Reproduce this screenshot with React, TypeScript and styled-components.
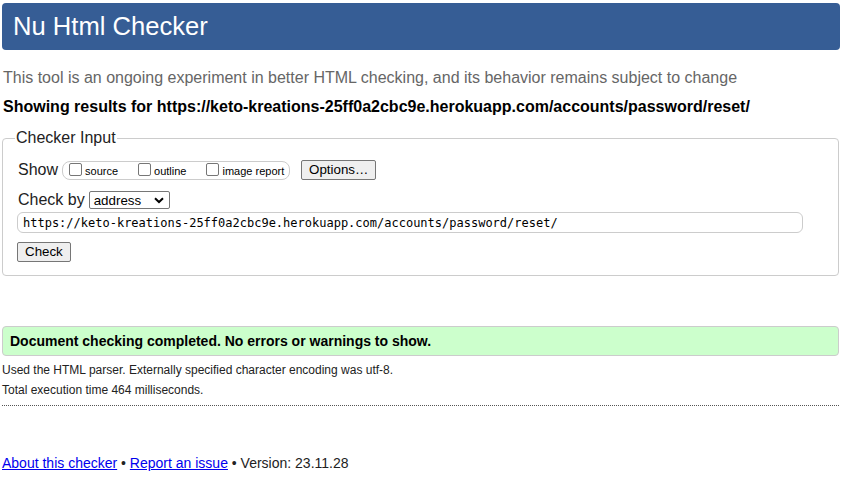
import styled, { createGlobalStyle } from "styled-components";

const GlobalStyle = createGlobalStyle`
  html, body {
    margin: 0;
    padding: 0;
    background: #fff;
  }
  body {
    font-family: "Liberation Sans", Arial, sans-serif;
    color: #000;
  }
`;

const Page = styled.div`
  padding: 3px 2px 0 2px;
  display: flex;
  flex-direction: column;
`;

const Header = styled.h1`
  margin: 0;
  height: 47px;
  display: flex;
  align-items: center;
  padding: 0 11px;
  background: #365d95;
  border-radius: 4px;
  color: #fff;
  font-size: 25.6px;
  font-weight: 400;
`;

const Intro = styled.p`
  margin: 18px 0 0 1px;
  font-size: 16px;
  line-height: 19px;
  color: #666;
`;

const Results = styled.p`
  margin: 10px 0 0 1px;
  font-size: 16px;
  line-height: 19px;
  font-weight: 700;
`;

const InputSet = styled.fieldset`
  margin: 13px 1px 0 0;
  padding: 13px 14px 13px 14px;
  border: 1px solid #ccc;
  border-radius: 4px;
  display: flex;
  flex-direction: column;
`;

const Legend = styled.legend`
  padding: 0 1px;
  margin-left: -2px;
  font-size: 16px;
  color: #222;
`;

const Row = styled.div<{ $top?: number }>`
  display: flex;
  align-items: center;
  margin-top: ${(p) => p.$top ?? 0}px;
  font-size: 16px;
`;

const RowLabel = styled.span`
  margin-left: 1px;
  margin-right: 4px;
  color: #222;
  white-space: nowrap;
`;

const ShowGroup = styled.div`
  flex: none;
  display: flex;
  align-items: center;
  height: 19px;
  width: 228px;
  box-sizing: border-box;
  border: 1px solid #ccc;
  border-radius: 8px;
  padding: 0 6px;
  gap: 20px;
  margin-right: 11px;
`;

const Option = styled.label`
  flex: none;
  display: flex;
  align-items: center;
  white-space: nowrap;
  font-size: 11px;
  line-height: 13px;
  margin-top: 2px;
`;

const Box = styled.span`
  flex: none;
  width: 13px;
  height: 13px;
  box-sizing: border-box;
  border: 1px solid #767676;
  border-radius: 2px;
  background: #fff;
  margin: -4px 3px 0 0;
`;

const Button = styled.button`
  font-family: "Liberation Sans", Arial, sans-serif;
  font-size: 13.33px;
  color: #000;
  background: #efefef;
  border: 1px solid #767676;
  border-radius: 2px;
  height: 20px;
  padding: 0 7px;
  line-height: 16px;
  white-space: nowrap;
`;

const Select = styled.div`
  display: flex;
  align-items: center;
  justify-content: space-between;
  width: 81px;
  height: 18px;
  box-sizing: border-box;
  border: 1px solid #767676;
  border-radius: 2px;
  padding: 0 5px 0 4px;
  font-size: 13.33px;
  margin-top: 1px;
`;

const UrlInput = styled.div`
  margin-top: 3px;
  width: 786px;
  height: 21px;
  box-sizing: border-box;
  border: 1px solid #ccc;
  border-radius: 6px;
  padding: 0 5px;
  display: flex;
  align-items: center;
  font-family: "DejaVu Sans Mono", "Liberation Mono", monospace;
  font-size: 12px;
`;

const CheckRow = styled.div`
  margin-top: 9px;
`;

const Success = styled.div`
  margin: 50px 1px 0 0;
  height: 30px;
  box-sizing: border-box;
  background: #ccffcc;
  border: 1px solid #ccc;
  border-radius: 4px;
  display: flex;
  align-items: center;
  padding-left: 7px;
  font-size: 14px;
  font-weight: 700;
`;

const Note = styled.p<{ $top: number }>`
  margin: ${(p) => p.$top}px 0 0 0;
  font-size: 12px;
  line-height: 14px;
  color: #222;
`;

const Divider = styled.hr`
  margin: 8px 1px 0 0;
  border: none;
  border-top: 1px dotted #555;
`;

const Footer = styled.p`
  margin: 49px 0 0 0;
  font-size: 14px;
  line-height: 16px;
  color: #222;

  a {
    color: #00e;
    text-decoration: underline;
  }
`;

const Chevron = () => (
  <svg width="10" height="7" viewBox="0 0 10 7">
    <path d="M1 1.2 L5 5 L9 1.2" fill="none" stroke="#000" strokeWidth="2" />
  </svg>
);

export default function App() {
  return (
    <>
      <GlobalStyle />
      <Page>
        <Header>Nu Html Checker</Header>
        <Intro>
          This tool is an ongoing experiment in better HTML checking, and its behavior remains
          subject to change
        </Intro>
        <Results>
          Showing results for https://keto-kreations-25ff0a2cbc9e.herokuapp.com/accounts/password/reset/
        </Results>

        <InputSet>
          <Legend>Checker Input</Legend>
          <Row>
            <RowLabel>Show</RowLabel>
            <ShowGroup>
              <Option>
                <Box />
                source
              </Option>
              <Option>
                <Box />
                outline
              </Option>
              <Option>
                <Box />
                image report
              </Option>
            </ShowGroup>
            <Button>Options…</Button>
          </Row>
          <Row $top={10}>
            <RowLabel>Check by</RowLabel>
            <Select>
              address
              <Chevron />
            </Select>
          </Row>
          <UrlInput>https://keto-kreations-25ff0a2cbc9e.herokuapp.com/accounts/password/reset/</UrlInput>
          <CheckRow>
            <Button>Check</Button>
          </CheckRow>
        </InputSet>

        <Success>Document checking completed. No errors or warnings to show.</Success>
        <Note $top={7}>Used the HTML parser. Externally specified character encoding was utf-8.</Note>
        <Note $top={6}>Total execution time 464 milliseconds.</Note>
        <Divider />
        <Footer>
          <a href="#about">About this checker</a> • <a href="#report">Report an issue</a> •
          Version: 23.11.28
        </Footer>
      </Page>
    </>
  );
}
